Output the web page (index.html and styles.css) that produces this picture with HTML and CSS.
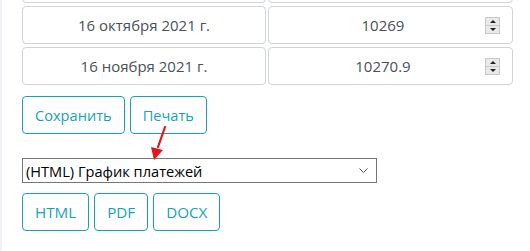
FILE: index.html
```html
<!DOCTYPE html>
<html lang="ru">
<head>
<meta charset="utf-8">
<link rel="stylesheet" href="styles.css">
</head>
<body>
<div class="page">
  <div class="grid">
    <div class="cell"></div>
    <div class="cell num"><span class="val"></span><span class="spin"><span class="up"></span><span class="down"></span></span></div>
    <div class="cell">16 октября 2021 г.</div>
    <div class="cell num"><span class="val">10269</span><span class="spin"><span class="up"></span><span class="down"></span></span></div>
    <div class="cell">16 ноября 2021 г.</div>
    <div class="cell num"><span class="val">10270.9</span><span class="spin"><span class="up"></span><span class="down"></span></span></div>
  </div>
  <div class="btns first">
    <button class="btn">Сохранить</button>
    <button class="btn">Печать</button>
  </div>
  <div class="selwrap">
    <select class="sel"><option>(HTML) График платежей</option></select>
    <svg class="chev" width="9" height="6" viewBox="0 0 9 6"><path d="M0.5 0.5 L4.5 4.5 L8.5 0.5" fill="none" stroke="#555" stroke-width="1"/></svg>
  </div>
  <div class="btns second">
    <button class="btn">HTML</button>
    <button class="btn">PDF</button>
    <button class="btn">DOCX</button>
  </div>
  <svg class="arrow" width="30" height="40" viewBox="0 0 30 40">
    <line x1="22" y1="2" x2="15" y2="22" stroke="#e8141b" stroke-width="2.2" stroke-linecap="round"/>
    <polygon points="8,22 20,25 11,35" fill="#e8141b"/>
  </svg>
</div>
</body>
</html>
```
FILE: styles.css
```css
html, body { margin: 0; padding: 0; background: #fff; }
body { font-family: "Open Sans", "Noto Sans", sans-serif; }
.page {
  position: relative;
  border-left: 2px solid #eef1f5;
  padding-left: 20px;
  height: 251px;
  overflow: hidden;
  box-sizing: border-box;
}
.grid {
  display: grid;
  grid-template-columns: 244px 245px;
  column-gap: 2px;
  row-gap: 3px;
  margin-top: -35px;
}
.cell {
  box-sizing: border-box;
  height: 38px;
  border: 1px solid #ced4da;
  border-radius: 4px;
  padding: 6px 12px;
  font-size: 15px;
  line-height: 24px;
  color: #495057;
  text-align: center;
  white-space: nowrap;
}
.num { display: flex; align-items: center; }
.num .val { flex: 1; text-align: center; }
.spin {
  width: 15px;
  height: 17px;
  display: flex;
  flex-direction: column;
  box-sizing: border-box;
  border: 1px solid #c9c9c9;
  background: #e9e9e9;
}
.spin .up, .spin .down {
  flex: 1;
  display: flex;
  align-items: center;
  justify-content: center;
}
.spin .up { border-bottom: 1px solid #c9c9c9; }
.spin .up::before {
  content: "";
  border-left: 3px solid transparent;
  border-right: 3px solid transparent;
  border-bottom: 3px solid #222;
}
.spin .down::before {
  content: "";
  border-left: 3px solid transparent;
  border-right: 3px solid transparent;
  border-top: 3px solid #222;
}
.btns { display: flex; gap: 5px; margin-top: 10px; }
.btns.first { margin-top: 11px; }
.btn {
  font-family: inherit;
  font-size: 14.6px;
  line-height: 24px;
  padding: 6px 12px;
  height: 38px;
  border: 1px solid #17a2b8;
  border-radius: 4px;
  color: #17a2b8;
  background: #fff;
}
.second .btn { font-size: 15.2px; }
.selwrap {
  position: relative;
  width: 355px;
  height: 25px;
  margin-top: 24px;
  box-sizing: border-box;
  border: 1px solid #767676;
}
.sel {
  appearance: none;
  -webkit-appearance: none;
  border: 0;
  outline: 0;
  background: #fff;
  width: 100%;
  height: 100%;
  padding: 0 3px;
  font-family: inherit;
  font-size: 14.6px;
  color: #000;
}
.chev { position: absolute; right: 8px; top: 9px; pointer-events: none; }
.arrow { position: absolute; left: 141px; top: 125px; }
```
